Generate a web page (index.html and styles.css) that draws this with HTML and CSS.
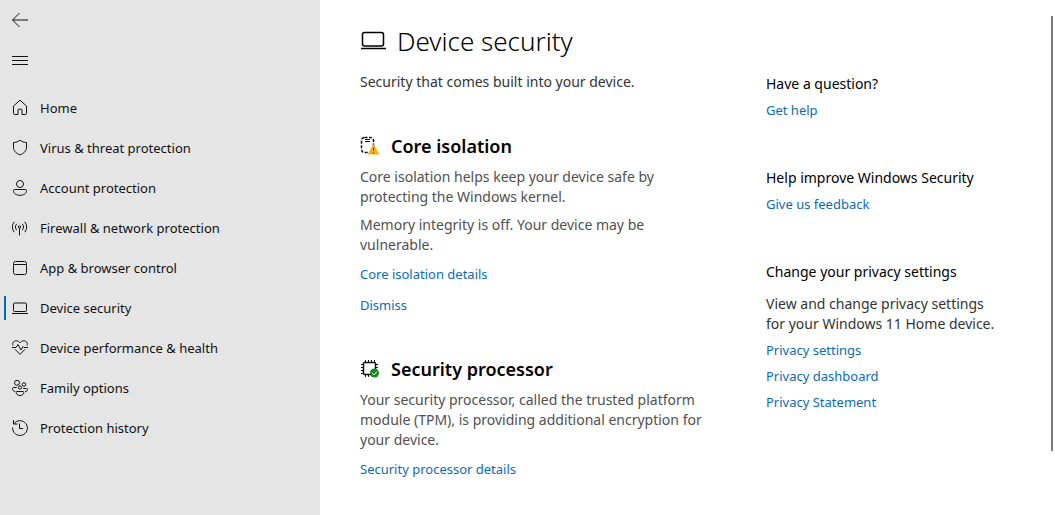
FILE: index.html
```html
<!doctype html>
<html lang="en">
<head>
<meta charset="utf-8">
<title>Windows Security</title>
<link rel="stylesheet" href="styles.css">
</head>
<body>

<aside class="sidebar">
  <button class="tool" type="button" aria-label="Back">
    <svg class="icon" viewBox="0 0 16 16"><path d="M0.5 8H16M7.5 1L0.5 8l7 7"/></svg>
  </button>
  <button class="tool" type="button" aria-label="Menu">
    <svg class="icon crisp" viewBox="0 0 16 16"><path d="M0 4.5h16M0 8.5h16M0 12.5h16"/></svg>
  </button>

  <nav class="menu">
    <a href="#home">
      <svg class="icon" viewBox="0 0 16 16"><path d="M1.500 6L8 .2 14.500 6v7.500a1 1 0 0 1-1 1H10V10a.8.8 0 0 0-.8-.8H6.800A.8.8 0 0 0 6 10v4.500H2.500a1 1 0 0 1-1-1z"/></svg>
      Home
    </a>
    <a href="#virus">
      <svg class="icon" viewBox="0 0 16 16"><path d="M8 .2C6 1.800 3.800 2.400 1.500 2.500V7c0 3.800 2.500 6.400 6.500 7.900 4-1.500 6.500-4.100 6.500-7.900V2.500C12.200 2.400 10 1.800 8 .2z"/></svg>
      Virus &amp; threat protection
    </a>
    <a href="#account">
      <svg class="icon" viewBox="0 0 16 16"><circle cx="8" cy="4" r="3.500"/><path d="M2.500 9.500h11a1 1 0 0 1 1 1c0 3-2.500 4.800-6.500 4.800s-6.500-1.800-6.500-4.800a1 1 0 0 1 1-1z"/></svg>
      Account protection
    </a>
    <a href="#firewall">
      <svg class="icon" viewBox="0 0 16 16"><circle cx="7.500" cy="7" r="1.200"/><path d="M7.500 8.200V15.500M4.800 10.200a4.500 4.500 0 0 1 0-6.400M10.200 10.200a4.500 4.500 0 0 0 0-6.400M2.300 12.200a7.800 7.800 0 0 1 0-10.400M12.700 12.200a7.800 7.800 0 0 0 0-10.400"/></svg>
      Firewall &amp; network protection
    </a>
    <a href="#browser">
      <svg class="icon" viewBox="0 0 16 16"><rect x="1.500" y="1.500" width="13" height="13" rx="2"/><path d="M1.500 4.500h13"/></svg>
      App &amp; browser control
    </a>
    <a href="#device" class="active" aria-current="page">
      <svg class="icon" viewBox="0 0 16 16"><rect x="1.500" y="3" width="13" height="8.500" rx="1"/><path d="M0 13.500h16"/></svg>
      Device security
    </a>
    <a href="#health">
      <svg class="icon" viewBox="0 0 16 16"><path d="M1 5.500C-.2 2.500 2 .8 4.200.8 6 .8 7 1.600 8 2.800 9 1.600 10 .8 11.800.8 14 .8 16.200 2.500 15 5.500M3 9.300l5 5 5-5M0 7.500h4l2-3L9 10l2-3.500 1 1h4"/></svg>
      Device performance &amp; health
    </a>
    <a href="#family">
      <svg class="icon" viewBox="0 0 16 16"><circle cx="5" cy="2.800" r="2.500"/><circle cx="12" cy="4.500" r="1.800"/><circle cx="8" cy="7.500" r="1.600"/><path d="M4.700 7.500H1.500a1 1 0 0 0-1 1c0 1.800 1 2.800 2.800 3M11.200 8.500h3.300a1 1 0 0 1 1 1c0 1.200-1 2-2.500 2.200M5 11.500h6a.8.8 0 0 1 .8.8c0 2-1.500 3.200-3.800 3.200s-3.800-1.200-3.800-3.200a.8.8 0 0 1 .8-.8z"/></svg>
      Family options
    </a>
    <a href="#history">
      <svg class="icon" viewBox="0 0 16 16"><path d="M1.500 0V4H5.500M1.800 4A7.400 7.400 0 1 1 .6 7.500M7.500 3.500V8.500H11"/></svg>
      Protection history
    </a>
  </nav>
</aside>

<main class="content">
  <div class="primary">
    <h1>
      <svg class="title-icon" viewBox="0 0 26 20"><rect x="2.500" y="1.500" width="21" height="13.500" rx="2"/><path d="M1 17.500h25"/></svg>
      Device security
    </h1>
    <p class="intro">Security that comes built into your device.</p>

    <section class="core">
      <h2>
        <svg class="section-icon" viewBox="0 0 20 20">
          <rect class="dashed" x="1.500" y="1.500" width="12" height="15" rx="3"/>
          <path d="M5 3.500h5M5 5.500h5"/>
          <path class="warn" d="M13.500 8L19.500 18.500h-12z"/>
          <path class="mark" d="M13.500 11.500v3.500M13.500 16.300v1.200"/>
        </svg>
        Core isolation
      </h2>
      <p>Core isolation helps keep your device safe by protecting the Windows kernel.</p>
      <p>Memory integrity is off. Your device may be vulnerable.</p>
      <a href="#core-details">Core isolation details</a>
      <a href="#dismiss">Dismiss</a>
    </section>

    <section class="processor">
      <h2>
        <svg class="section-icon" viewBox="0 0 20 20">
          <rect class="chip" x="3.500" y="3.500" width="12" height="12" rx="1"/>
          <path d="M5.500 1v2M8.500 1v2M11.500 1v2M14.500 1v2M5.500 16v2M8.500 16v2M1 5.500h2M1 8.500h2M1 11.500h2M1 14.500h2M16 5.500h2M16 8.500h2"/>
          <circle class="ok" cx="14.500" cy="14" r="4.500"/>
          <path class="tick" d="M12 14l2 2 3-3.500"/>
        </svg>
        Security processor
      </h2>
      <p>Your security processor, called the trusted platform module (TPM), is providing additional encryption for your device.</p>
      <a href="#processor-details">Security processor details</a>
    </section>
  </div>

  <aside class="help">
    <section>
      <h3>Have a question?</h3>
      <a href="#help">Get help</a>
    </section>
    <section>
      <h3>Help improve Windows Security</h3>
      <a href="#feedback">Give us feedback</a>
    </section>
    <section class="privacy">
      <h3>Change your privacy settings</h3>
      <p>View and change privacy settings for your Windows 11 Home device.</p>
      <a href="#privacy-settings">Privacy settings</a>
      <a href="#privacy-dashboard">Privacy dashboard</a>
      <a href="#privacy-statement">Privacy Statement</a>
    </section>
  </aside>
  <div class="scrollbar"></div>
</main>

</body>
</html>
```

FILE: styles.css
```css
* {
  box-sizing: border-box;
}

body {
  margin: 0;
  min-height: 100vh;
  display: flex;
  background: #fff;
  color: #000;
  font: 14px/20px "Noto Sans", "Open Sans", sans-serif;
}

a {
  color: #0a6cb4;
  text-decoration: none;
}

/* left navigation */
.sidebar {
  flex: 0 0 320px;
  background: #e5e5e5;
}

.tool {
  display: flex;
  align-items: center;
  width: 40px;
  height: 40px;
  padding: 0 12px;
  border: 0;
  background: none;
}

.icon {
  flex: none;
  width: 16px;
  height: 16px;
  fill: none;
  stroke: #111;
  stroke-width: 1;
}

.crisp {
  shape-rendering: crispEdges;
}

.menu {
  margin-top: 8px;
}

.menu a {
  position: relative;
  display: flex;
  align-items: center;
  gap: 12px;
  height: 40px;
  padding-left: 12px;
  color: #111;
  font-size: 13px;
}

.menu .active::before {
  content: "";
  position: absolute;
  left: 4px;
  top: 8px;
  width: 2px;
  height: 24px;
  background: #0067c0;
}

/* page */
.content {
  position: relative;
  flex: 1;
  display: grid;
  grid-template-columns: minmax(0, 1fr) 236px;
  gap: 56px;
  padding: 20px 53px 20px 40px;
}

h1, h2, h3, p {
  margin: 0;
}

h1 {
  display: flex;
  align-items: center;
  gap: 11px;
  font-size: 26px;
  font-weight: 300;
  line-height: 42px;
}

.title-icon {
  width: 26px;
  height: 20px;
  fill: none;
  stroke: #000;
  stroke-width: 1.5;
}

.intro {
  margin-top: 10px;
  color: #333;
}

h2 {
  display: flex;
  align-items: center;
  gap: 11px;
  margin-bottom: 8px;
  font-size: 18px;
  font-weight: 600;
  line-height: 26px;
}

.section-icon {
  width: 20px;
  height: 20px;
  fill: none;
  stroke: #111;
}

.section-icon .dashed {
  stroke-width: 1.5;
  stroke-dasharray: 3 1.5;
}

.section-icon .chip {
  stroke-width: 1.5;
}

.section-icon .warn {
  fill: #f8b017;
  stroke: none;
}

.section-icon .mark {
  stroke: #5a3c00;
}

.section-icon .ok {
  fill: #128a1c;
  stroke: none;
}

.section-icon .tick {
  stroke: #fff;
}

.primary section {
  color: #505050;
}

.primary h2 {
  color: #000;
}

.primary section p {
  margin-bottom: 8px;
}

.primary section a {
  display: block;
  width: fit-content;
  margin-bottom: 9px;
  font-size: 13px;
  line-height: 22px;
}

.core {
  margin-top: 41px;
}

.processor {
  margin-top: 40px;
}

.help {
  padding-top: 54px;
}

.help section {
  margin-bottom: 48px;
}

.help h3 {
  margin-bottom: 6px;
  font-size: 14px;
  font-weight: 400;
}

.help a {
  display: block;
  width: fit-content;
  margin-bottom: 6px;
  font-size: 13px;
}

.help p {
  margin-bottom: 6px;
  color: #333;
}

.help .privacy h3 {
  margin-bottom: 12px;
}

.scrollbar {
  position: absolute;
  top: 16px;
  right: 2px;
  bottom: 64px;
  width: 2px;
  background: #7a7a7a;
}
```
